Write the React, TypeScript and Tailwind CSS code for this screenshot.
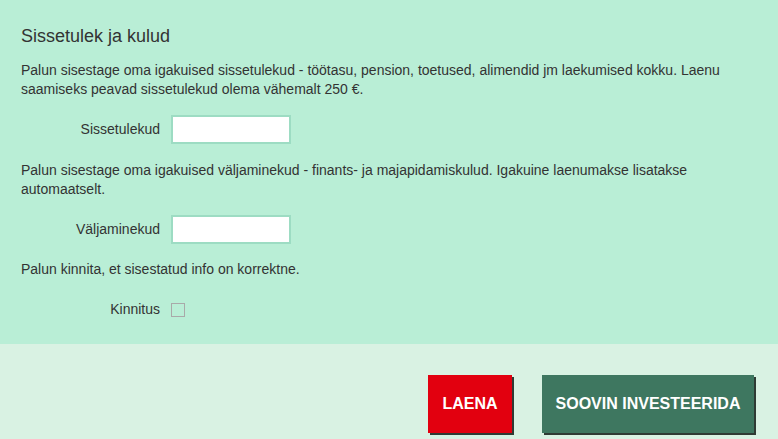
import { useState } from 'react';

function FieldRow({ label, children }: { label: string; children: React.ReactNode }) {
  return (
    <div className="flex items-center">
      <label className="w-[150px] text-right pr-[11px] text-[14px] text-[#333]">{label}</label>
      {children}
    </div>
  );
}

export default function App() {
  const [income, setIncome] = useState('');
  const [expenses, setExpenses] = useState('');
  const [confirmed, setConfirmed] = useState(false);

  return (
    <div className="w-[778px] h-[439px] bg-[#d9f2e3] font-['Liberation_Sans',sans-serif] text-[#333]">
      <div className="bg-[#b9eed6] h-[344px] pl-[21px] pt-[24px]">
        <h2 className="text-[18px] leading-[24px] text-[#333]">Sissetulek ja kulud</h2>
        <p className="mt-[13px] text-[14px] leading-[19px]">
          Palun sisestage oma igakuised sissetulekud - töötasu, pension, toetused, alimendid jm laekumised kokku. Laenu
          <br />
          saamiseks peavad sissetulekud olema vähemalt 250 €.
        </p>
        <div className="mt-[16px]">
          <FieldRow label="Sissetulekud">
            <input
              value={income}
              onChange={(e) => setIncome(e.target.value)}
              className="w-[120px] h-[29px] bg-white border-2 border-[#9ddcc3] outline-none px-1 text-[14px]"
            />
          </FieldRow>
        </div>
        <p className="mt-[17px] text-[14px] leading-[19px]">
          Palun sisestage oma igakuised väljaminekud - finants- ja majapidamiskulud. Igakuine laenumakse lisatakse
          <br />
          automaatselt.
        </p>
        <div className="mt-[16px]">
          <FieldRow label="Väljaminekud">
            <input
              value={expenses}
              onChange={(e) => setExpenses(e.target.value)}
              className="w-[120px] h-[29px] bg-white border-2 border-[#9ddcc3] outline-none px-1 text-[14px]"
            />
          </FieldRow>
        </div>
        <p className="mt-[16px] text-[14px] leading-[19px]">Palun kinnita, et sisestatud info on korrektne.</p>
        <div className="mt-[20px] h-[20px]">
          <FieldRow label="Kinnitus">
            <button
              type="button"
              onClick={() => setConfirmed(!confirmed)}
              className="w-[14px] h-[14px] border border-[#a9a9a9] bg-transparent flex items-center justify-center text-[10px] leading-none"
            >
              {confirmed ? '✓' : ''}
            </button>
          </FieldRow>
        </div>
      </div>
      <div className="flex justify-end gap-[30px] pt-[31px] pr-[24px]">
        <button className="w-[84px] h-[58px] bg-[#e2000f] text-white font-bold text-[16px] shadow-[2px_2px_0_#2f3b34]">
          LAENA
        </button>
        <button className="w-[212px] h-[58px] bg-[#3e7760] text-white font-bold text-[16px] shadow-[2px_2px_0_#2f3b34]">
          SOOVIN INVESTEERIDA
        </button>
      </div>
    </div>
  );
}
